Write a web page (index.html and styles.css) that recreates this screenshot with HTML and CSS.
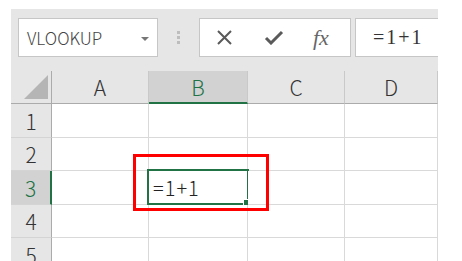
FILE: index.html
```html
<!DOCTYPE html>
<html lang="ja">

<head>
    <meta charset="UTF-8">
    <title>Excel 数式バー</title>
    <link rel="stylesheet" href="styles.css">
</head>

<body>
    <div class="sheet">
        <div class="toolbar">
            <div class="namebox">
                <span>VLOOKUP</span>
                <svg class="arrow" width="8" height="4" viewBox="0 0 8 4"><path d="M0 0H8L4 4Z" fill="#777"/></svg>
            </div>
            <div class="grip"><i></i><i></i><i></i></div>
            <div class="fxbuttons">
                <svg width="17" height="15" viewBox="0 0 17 15"><path d="M2 1L15 14M15 1L2 14" stroke="#5a5a5a" stroke-width="2" fill="none"/></svg>
                <svg width="20" height="15" viewBox="0 0 20 15"><path d="M2 8L7 13L18 2" stroke="#5a5a5a" stroke-width="3" fill="none"/></svg>
                <span class="fx">fx</span>
            </div>
            <div class="formula">=1+1</div>
        </div>

        <div class="grid">
            <div class="corner"><svg width="24" height="24" viewBox="0 0 24 24"><path d="M24 0V24H0Z" fill="#b5b5b5"/></svg></div>
            <div class="colhead">A</div>
            <div class="colhead active">B</div>
            <div class="colhead">C</div>
            <div class="colhead">D</div>

            <div class="rowhead">1</div>
            <div class="cell"></div><div class="cell"></div><div class="cell"></div><div class="cell"></div>

            <div class="rowhead">2</div>
            <div class="cell"></div><div class="cell"></div><div class="cell"></div><div class="cell"></div>

            <div class="rowhead active">3</div>
            <div class="cell"></div>
            <div class="cell selected"><span>=1+1</span><b class="handle"></b></div>
            <div class="cell"></div><div class="cell"></div>

            <div class="rowhead">4</div>
            <div class="cell"></div><div class="cell"></div><div class="cell"></div><div class="cell"></div>

            <div class="rowhead">5</div>
            <div class="cell"></div><div class="cell"></div><div class="cell"></div><div class="cell"></div>
        </div>

        <div class="highlight"></div>
    </div>
</body>

</html>
```

FILE: styles.css
```css
html,
body {
    margin: 0;
    padding: 0;
    background-color: #fff;
}

body {
    height: 261px;
    overflow: hidden;
}

.sheet {
    position: relative;
    margin: 9px 0 0 11px;
    width: 427px;
    height: 252px;
    background-color: #e6e6e6;
    overflow: hidden;
    font-family: "Noto Sans", "Noto Sans CJK JP", sans-serif;
    color: #444;
}

.toolbar {
    display: flex;
    align-items: stretch;
    height: 39px;
    padding: 9px 0 0 7px;
}

.namebox {
    box-sizing: border-box;
    width: 140px;
    display: flex;
    align-items: center;
    justify-content: space-between;
    padding: 0 8px 0 8px;
    background-color: #fff;
    border: 1px solid #c6c6c6;
    font-family: "Noto Sans CJK JP", sans-serif;
    font-size: 17px;
    font-weight: 300;
    color: #444;
}

.namebox .arrow {
    margin-top: 2px;
}

.grip {
    width: 41px;
    display: flex;
    flex-direction: column;
    align-items: center;
    justify-content: center;
    gap: 2px;
}

.grip i {
    width: 3px;
    height: 3px;
    background-color: #bdbdbd;
}

.fxbuttons {
    box-sizing: border-box;
    width: 152px;
    display: flex;
    align-items: center;
    padding-left: 16px;
    gap: 31px;
    background-color: #fff;
    border: 1px solid #c6c6c6;
}

.fx {
    font-family: "Liberation Serif", serif;
    font-style: italic;
    font-size: 22px;
    color: #666;
    margin-left: -2px;
}

.formula {
    flex: 1;
    margin-left: 4px;
    padding-left: 17px;
    display: flex;
    align-items: center;
    background-color: #fff;
    border: 1px solid #c6c6c6;
    border-right: none;
    font-family: "Liberation Serif", serif;
    font-size: 20px;
    letter-spacing: 2px;
    color: #333;
}

.grid {
    display: grid;
    grid-template-columns: 41px 97px 99px 97px 1fr;
    grid-template-rows: 33px 34px 33px 34px 33px 34px;
    margin-top: 14px;
}

.grid > div {
    box-sizing: border-box;
    display: flex;
    align-items: center;
    justify-content: center;
}

.corner {
    border-right: 1px solid #ababab;
    border-bottom: 1px solid #ababab;
    justify-content: flex-end !important;
    align-items: flex-end !important;
    padding: 0 3px 4px 0;
}

.corner svg {
    display: block;
}

.colhead {
    font-size: 21px;
    font-weight: 300;
    background-color: #e6e6e6;
    border-right: 1px solid #c9c9c9;
    border-bottom: 1px solid #ababab;
    font-family: "Noto Sans CJK JP", sans-serif;
    color: #333;
}

.rowhead {
    font-size: 21px;
    font-weight: 300;
    background-color: #e6e6e6;
    border-right: 1px solid #ababab;
    border-bottom: 1px solid #d4d4d4;
    font-family: "Noto Sans CJK JP", sans-serif;
    color: #333;
}

.colhead.active {
    background-color: #d2d2d2;
    color: #217346;
    border-bottom: 2px solid #217346;
}

.rowhead.active {
    background-color: #d2d2d2;
    color: #217346;
    border-right: 2px solid #217346;
}

.cell {
    position: relative;
    background-color: #fff;
    border-right: 1px solid #d9d9d9;
    border-bottom: 1px solid #d9d9d9;
}

.cell.selected {
    justify-content: flex-start !important;
}

.cell.selected::before {
    content: "";
    position: absolute;
    left: -2px;
    top: -2px;
    right: -2px;
    bottom: -1px;
    border: 2px solid #217346;
}

.cell.selected span {
    position: relative;
    margin-left: 4px;
    font-family: "Noto Sans CJK JP", sans-serif;
    font-size: 20px;
    font-weight: 300;
    letter-spacing: 1px;
    color: #222;
}

.handle {
    position: absolute;
    right: -3px;
    bottom: -2px;
    width: 6px;
    height: 6px;
    background-color: #217346;
    box-shadow: -1px -1px 0 #fff;
}

.highlight {
    position: absolute;
    left: 122px;
    top: 145px;
    width: 136px;
    height: 57px;
    box-sizing: border-box;
    border: 3px solid #f00;
}
```
